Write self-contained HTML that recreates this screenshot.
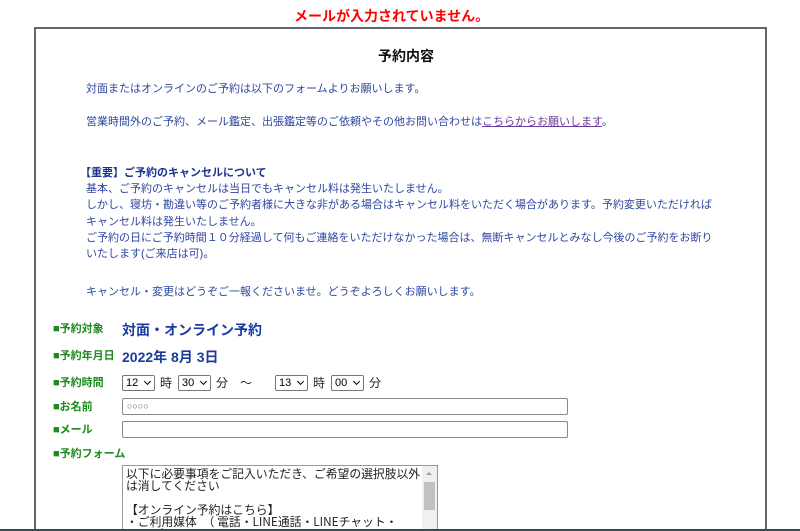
<!DOCTYPE html>
<html style="width:800px;height:531px;overflow:hidden"><head><meta charset="utf-8"><style>
body{margin:0;width:800px;height:531px;overflow:hidden;background:#fff;font-family:"Liberation Sans","Noto Sans CJK JP",sans-serif;position:relative}
.a{position:absolute;white-space:nowrap}
.t{font-size:11px;color:#2d47a0;line-height:16px}
.lb{font-size:11px;color:#1f8a1f;font-weight:bold;left:53px}
.v{color:#1a3aa0;font-weight:bold;font-size:14px;left:122px}
.sel{position:absolute;height:16px;border:1px solid #767676;border-radius:2px;font-size:11px;line-height:14px;padding-left:3px;box-sizing:border-box;color:#000;background:#fff}
.sel:after{content:"";position:absolute;right:4px;top:3px;width:4px;height:4px;border-right:1.5px solid #000;border-bottom:1.5px solid #000;transform:rotate(45deg)}
.k{font-size:12px;color:#222}
</style></head><body>
<div class="a" style="left:294px;top:6px;color:#f00;font-size:14px;font-weight:bold">メールが入力されていません。</div>
<div style="position:absolute;left:34px;top:27px;width:729px;height:504px;border:2px solid #666;border-bottom:0;box-sizing:border-box;width:733px"></div>
<div class="a" style="left:378px;top:46px;font-size:14px;font-weight:bold;color:#111">予約内容</div>
<div class="a t" style="left:86px;top:81px">対面またはオンラインのご予約は以下のフォームよりお願いします。</div>
<div class="a t" style="left:86px;top:114px">営業時間外のご予約、メール鑑定、出張鑑定等のご依頼やその他お問い合わせは<span style="color:#6a3a9a;text-decoration:underline">こちらからお願いします</span>。</div>
<div class="a t" style="left:80px;top:165px;font-weight:bold;color:#1a3590">【重要】ご予約のキャンセルについて</div>
<div class="a t" style="left:86px;top:181px;line-height:16.3px">基本、ご予約のキャンセルは当日でもキャンセル料は発生いたしません。<br>しかし、寝坊・勘違い等のご予約者様に大きな非がある場合はキャンセル料をいただく場合があります。予約変更いただければ<br>キャンセル料は発生いたしません。<br>ご予約の日にご予約時間１０分経過して何もご連絡をいただけなかった場合は、無断キャンセルとみなし今後のご予約をお断り<br>いたします(ご来店は可)。</div>
<div class="a t" style="left:86px;top:284px">キャンセル・変更はどうぞご一報くださいませ。どうぞよろしくお願いします。</div>
<div class="a lb" style="top:320px">■予約対象</div>
<div class="a v" style="top:320px">対面・オンライン予約</div>
<div class="a lb" style="top:347px">■予約年月日</div>
<div class="a v" style="top:347px">2022年 8月 3日</div>
<div class="a lb" style="top:374px">■予約時間</div>
<div class="sel" style="left:122px;top:375px;width:33px">12</div>
<div class="a k" style="left:160px;top:374px">時</div>
<div class="sel" style="left:178px;top:375px;width:33px">30</div>
<div class="a k" style="left:216px;top:374px">分　～</div>
<div class="sel" style="left:275px;top:375px;width:33px">13</div>
<div class="a k" style="left:313px;top:374px">時</div>
<div class="sel" style="left:331px;top:375px;width:33px">00</div>
<div class="a k" style="left:369px;top:374px">分</div>
<div class="a lb" style="top:398px">■お名前</div>
<div style="position:absolute;left:122px;top:398px;width:446px;height:17px;border:1px solid #888;border-radius:2px;box-sizing:border-box;font-size:9px;line-height:15px;padding-left:4px;color:#555">○○○○</div>
<div class="a lb" style="top:421px">■メール</div>
<div style="position:absolute;left:122px;top:421px;width:446px;height:17px;border:1px solid #888;border-radius:2px;box-sizing:border-box"></div>
<div class="a lb" style="top:445px">■予約フォーム</div>
<div style="position:absolute;left:122px;top:465px;width:316px;height:64px;border:1px solid #999;border-bottom:0;box-sizing:border-box;overflow:hidden">
<div style="font-family:'Noto Sans CJK JP',monospace;font-size:11.8px;line-height:12px;color:#222;padding:2px 3px;width:298px;white-space:normal">以下に必要事項をご記入いただき、ご希望の選択肢以外は消してください<br><br>【オンライン予約はこちら】<br>・ご利用媒体　（ 電話・LINE通話・LINEチャット・Zoom ）</div>
<div style="position:absolute;right:0;top:0;width:15px;height:64px;background:#f0f0f0"></div>
<div style="position:absolute;right:2px;top:16px;width:11px;height:28px;background:#c1c1c1"></div>
<div style="position:absolute;right:5px;top:6px;width:0;height:0;border-left:3px solid transparent;border-right:3px solid transparent;border-bottom:3px solid #a0a0a0"></div>
</div>
<div style="position:absolute;left:0;top:529px;width:800px;height:2px;background:#3a4a55"></div>
</body></html>
